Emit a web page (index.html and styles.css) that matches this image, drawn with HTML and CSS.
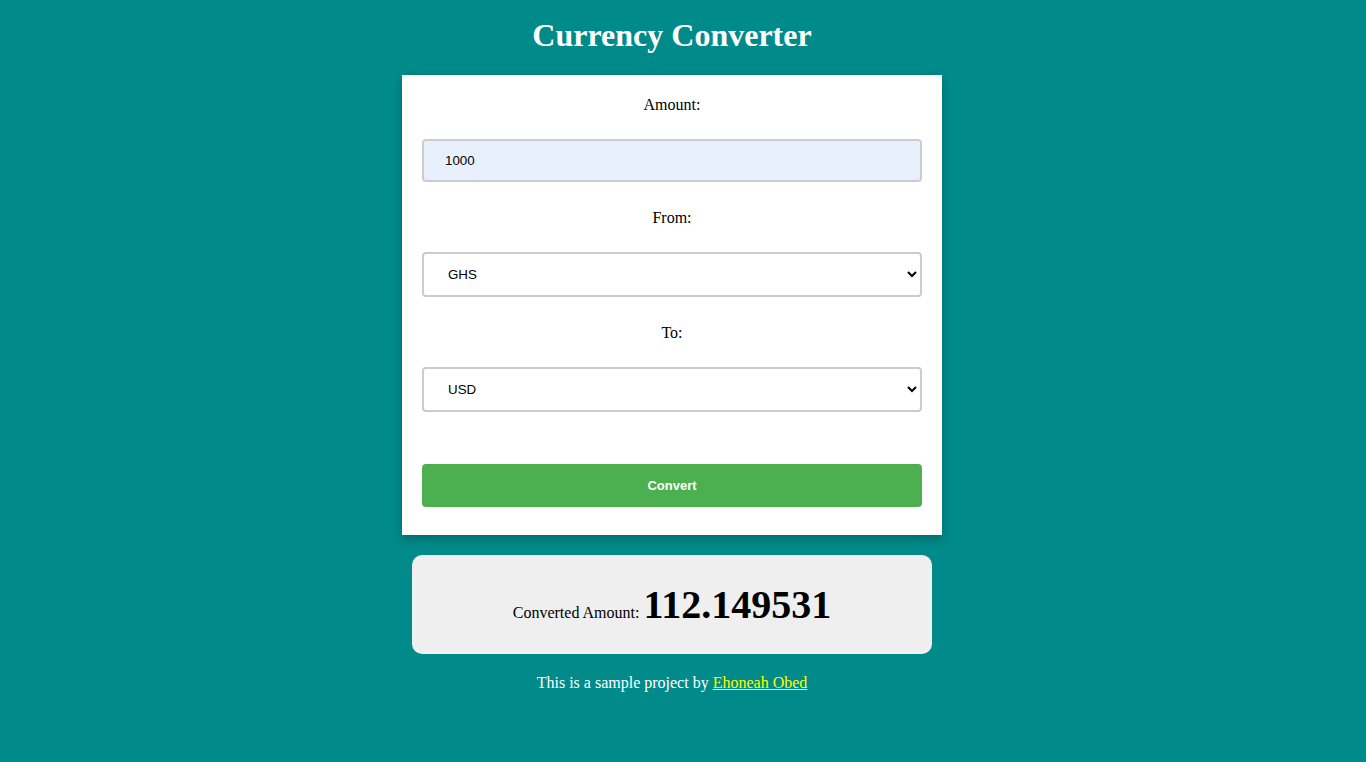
FILE: index.html
```html
<!DOCTYPE html>
<html lang="en">
<head>
<meta charset="utf-8">
<title>Currency Converter</title>
<link rel="stylesheet" href="styles.css">
</head>
<body>
  <h1 class="title">Currency Converter</h1>
  <form class="converter">
    <label class="field-label" for="amount">Amount:</label>
    <input class="control control-input" id="amount" type="number" value="1000">
    <label class="field-label" for="from">From:</label>
    <select class="control control-select" id="from">
      <option>GHS</option>
      <option>USD</option>
    </select>
    <label class="field-label" for="to">To:</label>
    <select class="control control-select" id="to">
      <option>USD</option>
      <option>GHS</option>
    </select>
    <button class="convert-btn" type="button">Convert</button>
  </form>
  <div class="result">
    <span class="result-label">Converted Amount:</span> <span class="result-value">112.149531</span>
  </div>
  <p class="footer">This is a sample project by <a class="footer-link" href="#">Ehoneah Obed</a></p>
</body>
</html>
```
FILE: styles.css
```css
html, body {
  margin: 0;
  padding: 0;
}
body {
  background: #008b8a;
  font-family: "Liberation Serif", "Times New Roman", serif;
  font-size: 16px;
  color: #000;
  padding: 17px 22px 0 0;
  text-align: center;
}
.title {
  margin: 0 0 21px;
  font-size: 32px;
  font-weight: bold;
  color: #fff;
  line-height: 37px;
}
.converter {
  width: 540px;
  box-sizing: border-box;
  margin: 0 auto;
  background: #fff;
  padding: 21px 20px 28px;
  box-shadow: 0 4px 10px rgba(0, 0, 0, 0.25);
  display: flex;
  flex-direction: column;
}
.field-label {
  display: block;
  line-height: 18px;
  margin-bottom: 25px;
}
.control {
  width: 100%;
  box-sizing: border-box;
  border: 2px solid #ccc;
  border-radius: 4px;
  font-family: "Liberation Sans", Arial, sans-serif;
  font-size: 13.33px;
  color: #000;
  margin: 0 0 27px;
  text-align: left;
}
.control-input {
  height: 43px;
  padding: 0 21px;
  background: #e8f0fe;
  outline: none;
  -moz-appearance: textfield;
  appearance: textfield;
}
.control-input::-webkit-inner-spin-button,
.control-input::-webkit-outer-spin-button {
  -webkit-appearance: none;
  margin: 0;
}
.control-select {
  height: 45px;
  padding: 0 20px;
  background-color: #fff;
}
.convert-btn {
  margin-top: 25px;
  height: 43px;
  width: 100%;
  border: none;
  border-radius: 4px;
  background: #4caf50;
  color: #fff;
  font-family: "Liberation Sans", Arial, sans-serif;
  font-size: 13px;
  font-weight: bold;
  cursor: pointer;
}
.result {
  width: 520px;
  box-sizing: border-box;
  margin: 20px auto 0;
  background: #efefef;
  border-radius: 10px;
  padding: 26px 20px 26px;
}
.result-label {
  font-size: 16px;
}
.result-value {
  font-size: 40px;
  font-weight: bold;
}
.footer {
  margin: 20px 0 0;
  color: #fff;
  line-height: 18px;
}
.footer-link {
  color: #ffff00;
  text-decoration: underline;
}
```
